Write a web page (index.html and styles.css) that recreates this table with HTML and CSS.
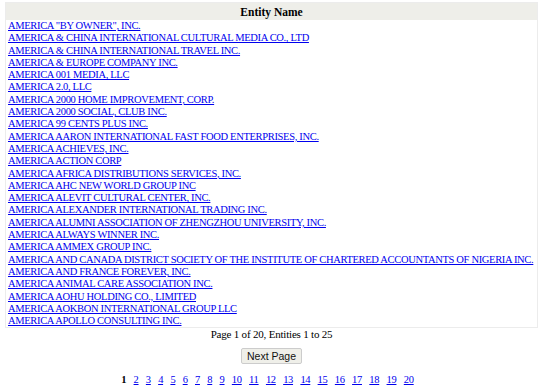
FILE: index.html
```html
<!DOCTYPE html>
<html>
<head>
<meta charset="utf-8">
<link rel="stylesheet" href="styles.css">
</head>
<body>
<table class="entities">
<thead><tr><th>Entity Name</th></tr></thead>
<tbody>
<tr><td><a href="#">AMERICA "BY OWNER", INC.</a></td></tr>
<tr><td><a href="#">AMERICA &amp; CHINA INTERNATIONAL CULTURAL MEDIA CO., LTD</a></td></tr>
<tr><td><a href="#">AMERICA &amp; CHINA INTERNATIONAL TRAVEL INC.</a></td></tr>
<tr><td><a href="#">AMERICA &amp; EUROPE COMPANY INC.</a></td></tr>
<tr><td><a href="#">AMERICA 001 MEDIA, LLC</a></td></tr>
<tr><td><a href="#">AMERICA 2.0, LLC</a></td></tr>
<tr><td><a href="#">AMERICA 2000 HOME IMPROVEMENT, CORP.</a></td></tr>
<tr><td><a href="#">AMERICA 2000 SOCIAL, CLUB INC.</a></td></tr>
<tr><td><a href="#">AMERICA 99 CENTS PLUS INC.</a></td></tr>
<tr><td><a href="#">AMERICA AARON INTERNATIONAL FAST FOOD ENTERPRISES, INC.</a></td></tr>
<tr><td><a href="#">AMERICA ACHIEVES, INC.</a></td></tr>
<tr><td><a href="#">AMERICA ACTION CORP</a></td></tr>
<tr><td><a href="#">AMERICA AFRICA DISTRIBUTIONS SERVICES, INC.</a></td></tr>
<tr><td><a href="#">AMERICA AHC NEW WORLD GROUP INC</a></td></tr>
<tr><td><a href="#">AMERICA ALEVIT CULTURAL CENTER, INC.</a></td></tr>
<tr><td><a href="#">AMERICA ALEXANDER INTERNATIONAL TRADING INC.</a></td></tr>
<tr><td><a href="#">AMERICA ALUMNI ASSOCIATION OF ZHENGZHOU UNIVERSITY, INC.</a></td></tr>
<tr><td><a href="#">AMERICA ALWAYS WINNER INC.</a></td></tr>
<tr><td><a href="#">AMERICA AMMEX GROUP INC.</a></td></tr>
<tr><td><a href="#">AMERICA AND CANADA DISTRICT SOCIETY OF THE INSTITUTE OF CHARTERED ACCOUNTANTS OF NIGERIA INC.</a></td></tr>
<tr><td><a href="#">AMERICA AND FRANCE FOREVER, INC.</a></td></tr>
<tr><td><a href="#">AMERICA ANIMAL CARE ASSOCIATION INC.</a></td></tr>
<tr><td><a href="#">AMERICA AOHU HOLDING CO., LIMITED</a></td></tr>
<tr><td><a href="#">AMERICA AOKBON INTERNATIONAL GROUP LLC</a></td></tr>
<tr><td><a href="#">AMERICA APOLLO CONSULTING INC.</a></td></tr>
</tbody>
</table>
<div class="summary">Page 1 of 20, Entities 1 to 25</div>
<div class="nav"><button class="next">Next Page</button></div>
<div class="pages"><b>1</b> <a href="#">2</a> <a href="#">3</a> <a href="#">4</a> <a href="#">5</a> <a href="#">6</a> <a href="#">7</a> <a href="#">8</a> <a href="#">9</a> <a href="#">10</a> <a href="#">11</a> <a href="#">12</a> <a href="#">13</a> <a href="#">14</a> <a href="#">15</a> <a href="#">16</a> <a href="#">17</a> <a href="#">18</a> <a href="#">19</a> <a href="#">20</a></div>
</body>
</html>
```
FILE: styles.css
```css
html, body {
  margin: 0;
  padding: 0;
  background: #fff;
}
body {
  padding: 2px 0 0 5px;
  font-family: "Liberation Serif", "Times New Roman", serif;
  font-size: 11px;
  color: #000;
  width: 533px;
}
.entities {
  width: 533px;
  table-layout: fixed;
  border-collapse: collapse;
  border: 1px solid #ececec;
}
.entities th {
  background: #eeeee9;
  font-size: 11.5px;
  font-weight: bold;
  text-align: center;
  height: 17px;
  padding: 0;
}
.entities td {
  padding: 0 2px;
  font-size: 10.5px;
  letter-spacing: -0.33px;
  line-height: 12.3px;
  white-space: nowrap;
}
.entities a {
  color: #0000ee;
}
.summary {
  text-align: center;
  font-size: 11px;
  letter-spacing: -0.2px;
  line-height: 13px;
  margin-top: 0;
}
.nav {
  text-align: center;
  margin-top: 7px;
}
.next {
  font-family: "Liberation Sans", Arial, sans-serif;
  font-size: 10.5px;
  background: #efefe9;
  border: 1px solid #ccc;
  border-radius: 2px;
  padding: 0 5px;
  height: 16px;
  color: #111;
}
.pages {
  text-align: center;
  margin-top: 10px;
  margin-right: 8px;
  font-size: 10.5px;
  letter-spacing: -0.3px;
  word-spacing: 5px;
}
.pages a {
  color: #0000ee;
}
```
